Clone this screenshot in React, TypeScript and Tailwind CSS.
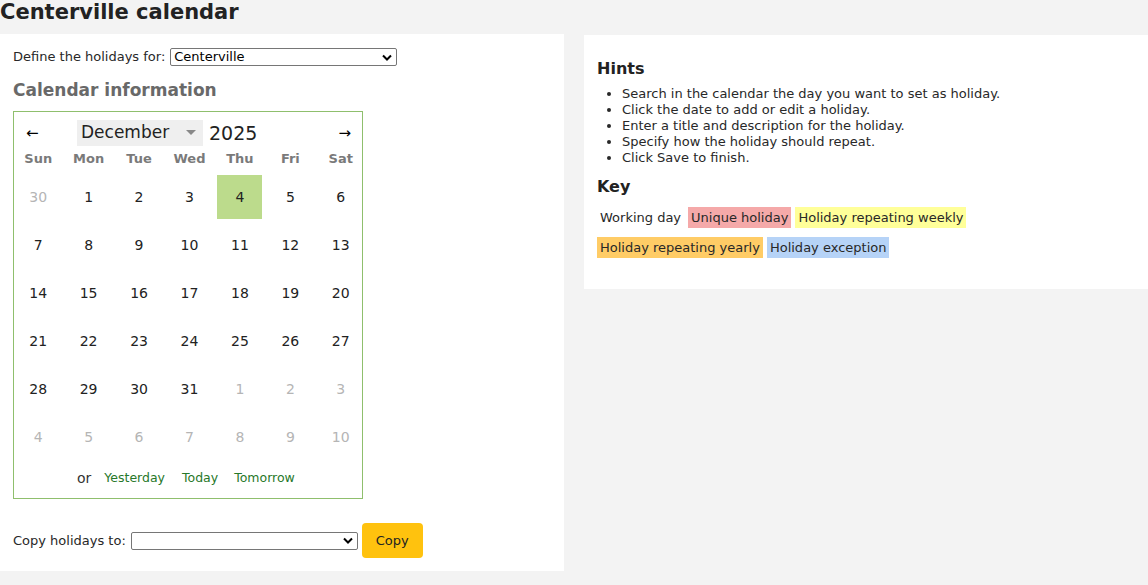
import React from "react";

const weekdays = ["Sun", "Mon", "Tue", "Wed", "Thu", "Fri", "Sat"];

// 6 weeks shown, with leading/trailing days of other months
const days: { n: number; out?: boolean; today?: boolean }[] = [
  { n: 30, out: true },
  ...Array.from({ length: 31 }, (_, i) => ({ n: i + 1, today: i + 1 === 4 })),
  ...Array.from({ length: 10 }, (_, i) => ({ n: i + 1, out: true })),
];

const hints = [
  "Search in the calendar the day you want to set as holiday.",
  "Click the date to add or edit a holiday.",
  "Enter a title and description for the holiday.",
  "Specify how the holiday should repeat.",
  "Click Save to finish.",
];

function Select({ value, className }: { value: string; className: string }) {
  return (
    <div
      className={`flex items-center justify-between border border-[#767676] rounded-[2px] bg-white pl-[3px] pr-[4px] text-[13px] text-black ${className}`}
    >
      <span>{value}</span>
      <svg width="10" height="7" viewBox="0 0 10 7">
        <path d="M1 1.5 L5 5.5 L9 1.5" fill="none" stroke="#000" strokeWidth="2" />
      </svg>
    </div>
  );
}

export default function App() {
  return (
    <div
      className="min-h-[585px] w-[1148px] bg-[#f3f3f3] text-[#282828]"
      style={{ fontFamily: "'DejaVu Sans', Verdana, sans-serif" }}
    >
      {/* --- TITLE --- */}
      <h1 className="h-[34px] text-[21px] font-bold leading-[24px] text-[#222]">Centerville calendar</h1>

      <div className="flex items-start gap-5">
        {/* --- LEFT PANEL --- */}
        <div className="w-[564px] bg-white px-[13px] pt-[13px] pb-[13px]">
          <div className="flex items-center gap-[5px] text-[13px] h-[20px]">
            <span>Define the holidays for:</span>
            <Select value="Centerville" className="w-[227px] h-[18px]" />
          </div>

          <h2 className="mt-[12px] text-[17px] font-bold text-[#696969] leading-[22px]">Calendar information</h2>

          {/* Calendar */}
          <div className="mt-[10px] w-[350px] border border-[#8fbf6d] pb-[8px]">
            <div className="relative flex items-center h-[26px] mt-[8px]">
              <span className="absolute left-[12px] top-[4px] text-[15px] leading-[18px] text-black">←</span>
              <div className="ml-[63px] flex items-center justify-between w-[126px] h-[26px] bg-[#efefef] pl-[4px] pr-[7px]">
                <span className="text-[17px] text-[#222]">December</span>
                <svg width="10" height="6" viewBox="0 0 10 6">
                  <path d="M0 0 L10 0 L5 5 Z" fill="#888" />
                </svg>
              </div>
              <span className="ml-[6px] text-[19px] text-[#222]">2025</span>
              <span className="absolute right-[11px] top-[4px] text-[15px] leading-[18px] text-black">→</span>
            </div>

            <div className="grid grid-cols-7 w-[353px] -ml-px mt-[5px]">
              {weekdays.map((w) => (
                <div key={w} className="text-center text-[13px] font-bold text-[#7a7a7a] leading-[16px]">
                  {w}
                </div>
              ))}
            </div>

            <div className="grid grid-cols-7 w-[353px] -ml-px mt-[6px]">
              {days.map((d, i) => (
                <div key={i} className="h-[48px] flex items-center justify-center">
                  <div
                    className={`w-[45px] h-[44px] flex items-center justify-center text-[14px] ${
                      d.today ? "bg-[#bcdb8c] text-[#222]" : d.out ? "text-[#b5b5b5]" : "text-[#222]"
                    }`}
                  >
                    {d.n}
                  </div>
                </div>
              ))}
            </div>

            <div className="flex items-center mt-[5px] h-[24px] pl-[63px] text-[12.5px]">
              <span className="text-[14px] text-[#333]">or</span>
              <span className="ml-[13px] text-[#27782a]">Yesterday</span>
              <span className="ml-[17px] text-[#27782a]">Today</span>
              <span className="ml-[16px] text-[#27782a]">Tomorrow</span>
            </div>
          </div>

          <div className="flex items-center gap-[5px] mt-[24px] text-[13px]">
            <span>Copy holidays to:</span>
            <Select value="" className="w-[227px] h-[18px]" />
            <button className="-ml-px h-[35px] w-[61px] rounded-[4px] bg-[#ffc20e] text-[13px] text-[#222]">
              Copy
            </button>
          </div>
        </div>

        {/* --- RIGHT PANEL --- */}
        <div className="w-[564px] mt-px bg-white px-[13px] pt-[24px] pb-[31px]">
          <h3 className="text-[16px] font-bold leading-[20px] text-[#222]">Hints</h3>
          <ul className="mt-[7px] ml-[25px] list-disc text-[13px] leading-[16px]">
            {hints.map((h) => (
              <li key={h}>{h}</li>
            ))}
          </ul>
          <h3 className="mt-[11px] text-[16px] font-bold leading-[20px] text-[#222]">Key</h3>
          <div className="mt-[10px] flex flex-wrap gap-x-[4px] gap-y-[9px] text-[13px] leading-[21px]">
            <span className="px-[3px]">Working day</span>
            <span className="px-[3px] bg-[#f5a9a9]">Unique holiday</span>
            <span className="px-[3px] bg-[#ffff99]">Holiday repeating weekly</span>
            <span className="px-[3px] bg-[#ffcc66]">Holiday repeating yearly</span>
            <span className="px-[3px] bg-[#b6d3f7]">Holiday exception</span>
          </div>
        </div>
      </div>
    </div>
  );
}
